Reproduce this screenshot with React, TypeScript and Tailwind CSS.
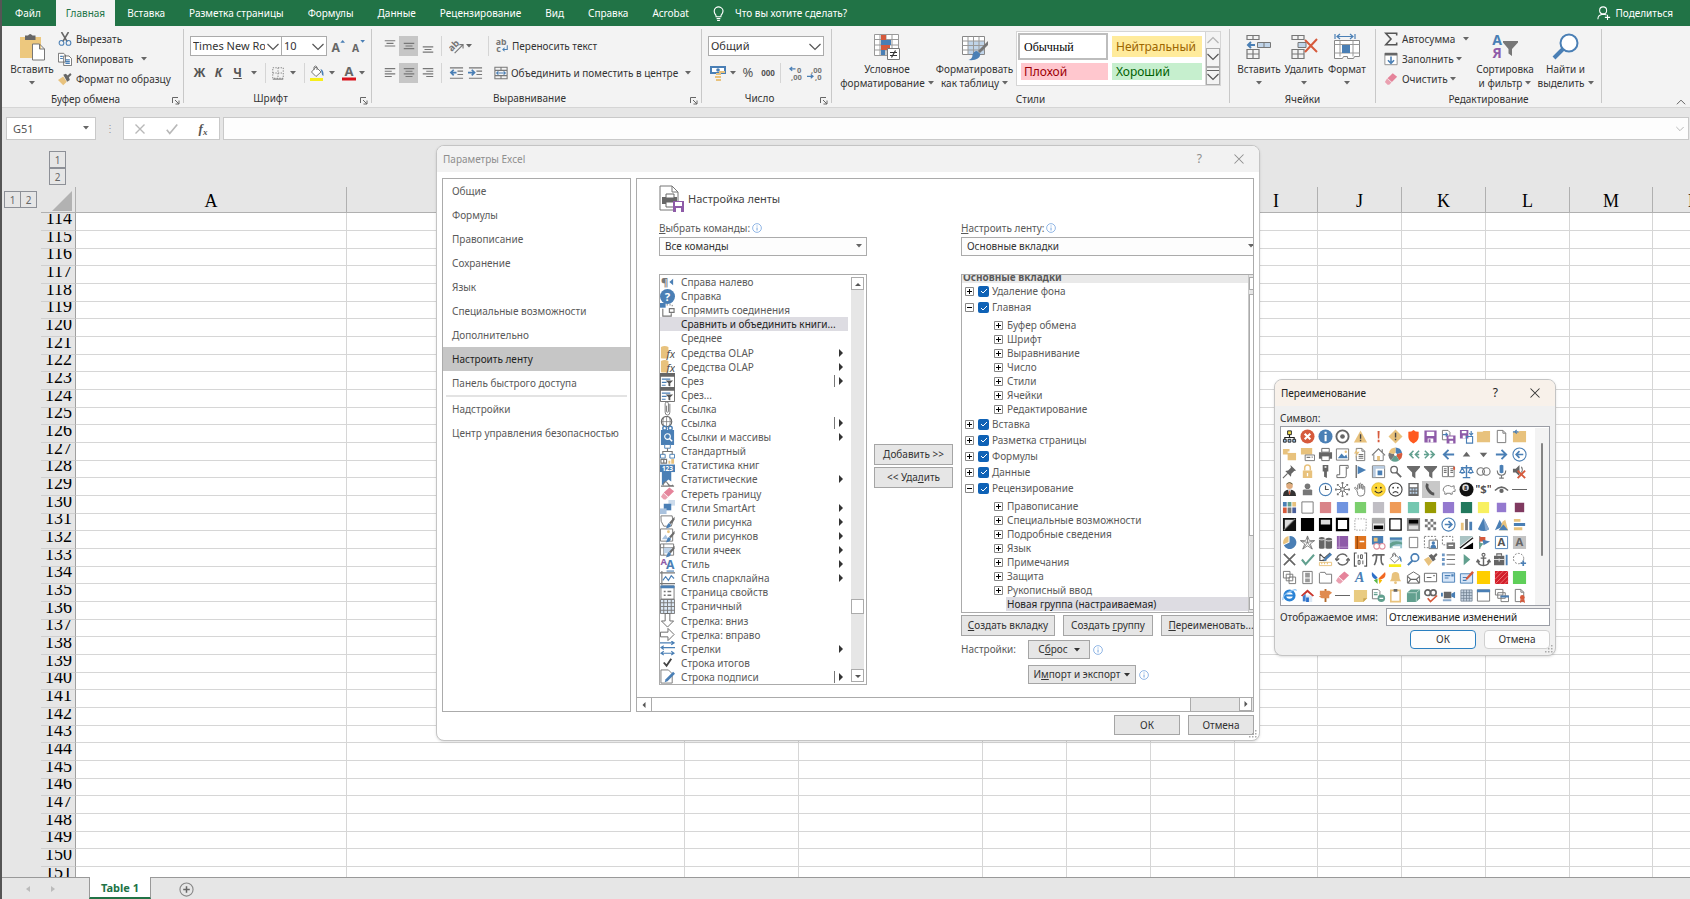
import React, { FC, ReactNode, useState } from 'react'

const BLUE = '#4a7fb5'
const GRAY = '#777777'
const TAN = '#e8c27d'
const PURPLE = '#8e5ba8'
const TEAL = '#62a08f'
const RED = '#d65a3c'

/* ---------- drawing helpers ---------- */

type ShapeProps = { d: string; c?: string; w?: number }

const F: FC<ShapeProps> = ({ d, c = GRAY }) => <path d={d} fill={c} />
const S: FC<ShapeProps> = ({ d, c = GRAY, w = 1.2 }) => (
  <path d={d} fill="none" stroke={c} strokeWidth={w} />
)
const C: FC<{ x?: number; y?: number; r?: number; f?: string; s?: string; w?: number }> = ({
  x = 8,
  y = 8,
  r = 6,
  f = 'none',
  s,
  w = 1.2,
}) => <circle cx={x} cy={y} r={r} fill={f} stroke={s} strokeWidth={w} />
const T: FC<{ x?: number; y?: number; s?: number; c?: string; children: ReactNode }> = ({
  x = 8,
  y = 12,
  s = 12,
  c = GRAY,
  children,
}) => (
  <text x={x} y={y} fontSize={s} fill={c} textAnchor="middle" fontWeight="bold">
    {children}
  </text>
)

const Icon: FC<{ className?: string; box?: number; children: ReactNode }> = ({
  className = 'size-[14px]',
  box = 16,
  children,
}) => (
  <svg viewBox={`0 0 ${box} ${box}`} className={`shrink-0 ${className}`} aria-hidden="true">
    {children}
  </svg>
)

const Caret: FC<{ className?: string }> = ({ className = 'text-[#666]' }) => (
  <svg viewBox="0 0 6 4" className={`h-1 w-1.5 shrink-0 ${className}`} aria-hidden="true">
    <path d="M0 0h6L3 3.5z" fill="currentColor" />
  </svg>
)

const Chevron: FC<{ className?: string }> = ({ className = 'h-2 w-3' }) => (
  <svg viewBox="0 0 12 8" className={`shrink-0 ${className}`} aria-hidden="true">
    <path d="M.5 1 6 6.500 11.500 1" fill="none" stroke="#555" strokeWidth="1.2" />
  </svg>
)

const brush = (
  <>
    <F d="M15.500 3v3l-4 5-1.800-1.800z" c="#6b6b6b" />
    <F d="M9.500 9.500l2 1.800c0 3-2.500 4-5.500 4 1.500-1 1-4 3.500-5.800z" c={BLUE} />
  </>
)
const page = <path d="M3.500 1.500h6l3 3v10h-9z M9.500 1.500v3h3" fill="#fff" stroke={GRAY} />
const folder = <F d="M1 3h6l1-1h7v12H1z" c={TAN} />
const floppy = (
  <>
    <F d="M1.500 1.500h13v13h-13z" c={PURPLE} />
    <F d="M4 3h8v4.500H4zM5 10h6v4.500H5z" c="#fff" />
    <F d="M6 11h2v3H6z" c={PURPLE} />
  </>
)
const eraser = (
  <>
    <F d="M10 1.500l5 4-6 6-5-4.500z" c="#e5839a" />
    <F d="M3.500 7.500l5 4.500-2.500 2.500H4l-3-3z" c="#eaa0b0" />
  </>
)
const bucket = (
  <>
    <F d="M1 13h13v3H1z" c="#f7ee1a" />
    <path d="M7 2l5 5-5 4.500L2.500 7z M5 5V2q1.500-2 3 0v3" fill="#fff" stroke={GRAY} />
    <F d="M11.500 4q3.500 1 3 7-2-1-2-4z" c={BLUE} />
  </>
)

/* symbols offered for a ribbon group, in reading order */
const symbols: ReactNode[] = [
  <><S d="M8 6v3M3 11V9h10v2" c="#222" /><path d="M6 2h4v4H6z" fill="#f4e04d" stroke="#222" /><path d="M1.500 11h3v3h-3zM6.500 11h3v3h-3zM11.500 11h3v3h-3z" fill="#9cc3e6" stroke="#222" /></>,
  <><C r={7.5} f={RED} /><S d="M5 5l6 6M11 5l-6 6" c="#fff" w={2.2} /></>,
  <><C r={7.5} f={BLUE} /><F d="M7 6.500h2.200V13H7zM7 3h2.200v2H7z" c="#fff" /></>,
  <><C r={6.5} s="#666" w={2} /><C r={2.5} f="#666" /></>,
  <><F d="M8 1.500L15 14.500H1z" c={TAN} /><F d="M7.300 5.500h1.500v5H7.300zM7.300 11.500h1.500V13H7.300z" c="#444" /></>,
  <F d="M7 2h2.200L8.800 10H7.300zM7.100 11.500h2V14h-2z" c={RED} />,
  <><F d="M8 .5L15.500 8 8 15.500.5 8z" c={TAN} /><F d="M7.300 4h1.500v5H7.300zM7.300 10.500h1.500V12H7.300z" c="#444" /></>,
  <F d="M2.500 3q3.500 0 5.500-2 2 2 5.500 2v5c0 4-3 6-5.500 7.500C5.500 14 2.500 12 2.500 8z" c="#ff5a1f" />,
  floppy,
  <><path d="M1.500 1.500h6l2 2v8h-8z" fill="#fff" stroke={GRAY} /><S d="M2 6h4M5 4l2 2-2 2" c={BLUE} /><F d="M6 7h9.500v8.500H6z" c={PURPLE} /><F d="M8 8h5v2.500H8zM9 12.500h4v3H9z" c="#fff" /></>,
  <><F d="M1 1h9v9H1z" c={PURPLE} /><F d="M3 2h5v2.500H3zM4 7h3v3H4z" c="#fff" /><S d="M8 8h6.500v7H8zM13 2v4M11 4.500l2 2 2-2" c={BLUE} /></>,
  folder,
  page,
  <>{folder}<S d="M1 3h6M5 1L3 3l2 2" c={BLUE} /></>,
  <><F d="M1 2h7v6H1zM6 6h9v8H6z" c={TAN} /><S d="M6 5.500h9" c="#fff" /></>,
  <><F d="M1 1h12v7H1z" c={TAN} /><path d="M5.500 8.500h10v6h-10z" fill="#fff" stroke={GRAY} /><S d="M7 11h4M13 10v1.500" /></>,
  <><F d="M1 5.500h14v7H1z" c="#666" /><path d="M4 1.500h8v4H4zM4 9.500h8v5H4z" fill="#fff" stroke="#666" /></>,
  <><path d="M1.500 2h13v12h-13z" fill="#fff" stroke={GRAY} /><F d="M3 12l4-5 3 3 2-2 1.500 4z" c={BLUE} /><C x={11.500} y={5} r={1.3} f={TAN} /></>,
  <>{page}<S d="M6 8h5M6 10h5M6 12h5" /><F d="M5 1L1 7h3l-2 5 5-7H4z" c={TAN} /></>,
  <><path d="M3 8v6.500h10V8" fill="#fff" stroke={GRAY} /><S d="M1 9l7-7 7 7M12 2.500v3" /><F d="M6.500 9.500h3v5h-3z" c={TAN} /></>,
  <><F d="M8 8V.5A7.500 7.500 0 0 1 15 6z" c={BLUE} /><F d="M8 8l7-2a7.500 7.500 0 0 1-3 8z" c={RED} /><F d="M8 8l4 6a7.500 7.500 0 0 1-9 0z" c={TEAL} /><F d="M8 8l-5 6A7.500 7.500 0 0 1 1 6z" c={GRAY} /><F d="M8 8L1 6A7.500 7.500 0 0 1 8 .5z" c={TAN} /><C r={1.500} f="#fff" /></>,
  <S d="M8 4L4 8l4 4M14 4l-4 4 4 4M4 8h3M10 8h4" c={TEAL} w={1.6} />,
  <S d="M8 4l4 4-4 4M2 4l4 4-4 4M1 8h4M8 8h4" c={TEAL} w={1.6} />,
  <S d="M14 8H3M8 3L3 8l5 5" c={BLUE} w={2} />,
  <F d="M8 5l4 5H4z" c="#666" />,
  <F d="M8 11L4 6h8z" c="#666" />,
  <S d="M2 8h11M8 3l5 5-5 5" c={BLUE} w={2} />,
  <><C r={7} s={BLUE} /><S d="M12 8H4.500M8 4.500L4.500 8 8 11.500" c={BLUE} w={1.8} /></>,
  <><F d="M9 1l6 6-2 .5-3 3-.5 3-6-6 3-.5 3-3z" c="#666" /><S d="M6 10l-5 5" c="#666" /></>,
  <><F d="M3 7h10v8H3z" c={TAN} /><S d="M5 7V4a3 3 0 0 1 6 0v3" c={TAN} w={1.600} /><F d="M7.300 9.500h1.400V13H7.300z" c="#fff" /></>,
  <><F d="M5 1h6v7H9.500v7l-3-1.500V8H5z" c="#666" /><F d="M7 2.500h2v1.500H7z" c="#fff" /></>,
  <><path d="M5 1.500h9v3h-2v8q0 2-2 2H2v-3h3z" fill="#fff" stroke="#666" /><S d="M12 4.500V3" /></>,
  <><S d="M3.500 1v14" c={GRAY} w={1.600} /><F d="M5 2l9 4.500L5 11z" c={BLUE} /></>,
  <><path d="M1.500 2h13v12.500h-13z" fill="#fff" stroke={GRAY} /><F d="M2 2h12.500v3H2zM2 5h3v9H2z" c="#b8cbe0" /><F d="M7 7h5v5H7z" c={BLUE} /></>,
  <><C x={6.500} y={6} r={3.500} s="#666" w={1.400} /><S d="M9 9l5 5" c="#666" w={2} /></>,
  <F d="M1 2h14v1.500L10 9v6.500L6.500 13V9L1 3.500z" c="#6b6b6b" />,
  <F d="M1 2h14v1.500L10 9v6.500L6.500 13V9L1 3.500z" c="#6b6b6b" />,
  <><path d="M1.500 2.500h6v11h-6zM8 2.500h6v11H8z" fill="#fff" stroke={GRAY} /><S d="M3 5h3M3 7h3M3 9h3M10 5h3M10 7h3M10 9h3" /><F d="M13 3h2v3h-2z" c={RED} /></>,
  <><S d="M8 1v13M4 14.500h8M2 4h12" c={BLUE} w={1.500} /><S d="M3.500 4L1 9h5zM12.500 4L10 9h5z" c={BLUE} /><F d="M1 9h5q-2.500 3-5 0M10 9h5q-2.500 3-5 0" c={BLUE} /></>,
  <><C x={5} r={4} s={GRAY} /><C x={11} r={4} s={GRAY} /></>,
  <><F d="M6 1.500q2-1.500 4 0V9q-2 1.500-4 0z" c={BLUE} /><S d="M3.500 7q0 5 4.500 5t4.500-5M8 12v3M5.500 15h5" /></>,
  <><F d="M1 5h3l4-4v12L4 9H1z" c="#666" /><S d="M10 3q2 3 0 6" /><S d="M6 7l8 8M14 7l-8 8" c={RED} w={2} /></>,
  <><C y={4} r={3.500} f="#e0ac7e" /><F d="M4.500 3q3-4 7 0L11 1.500Q8-1 5 1.500z" c="#553" /><F d="M1 15q0-7 7-7t7 7z" c="#333" /><F d="M6.500 8h3L8 14z" c="#fff" /><F d="M7.500 9h1l.5 4H7z" c={RED} /></>,
  <><C y={4.500} r={3} f="#777" /><F d="M3 14V9q0-1 1.500-1h7Q13 8 13 9v5z" c="#777" /></>,
  <><C r={6.500} s={BLUE} /><S d="M8 4v4h3.500" c="#555" /></>,
  <><S d="M8 2v12M2 8h12M4 4l8 8M12 4l-8 8" c={GRAY} w={1} /><C r={2} f="#fff" s={GRAY} /><F d="M7 0h2v2H7zM7 14h2v2H7zM0 7h2v2H0zM14 7h2v2h-2zM2 2h2v2H2zM12 2h2v2h-2zM2 12h2v2H2zM12 12h2v2h-2z" /></>,
  <path d="M4 9L2 7q-1-1 .5-1.500L5 8V3q1-1.500 1.800 0V7 2q1-1.500 1.900 0v5-4q1-1.500 1.900 0v5-3q1-1.500 1.900 0v6q0 4-4 4T5 12z" fill="#fff" stroke={GRAY} />,
  <><C r={7.3} f="#ffd83b" s="#d8a900" w={0.6} /><C x={5.500} y={6} r={1} f="#333" /><C x={10.500} y={6} r={1} f="#333" /><S d="M4 9.500q4 4.500 8 0" c="#333" /></>,
  <><C r={7} f="#fff" s="#444" /><C x={5.500} y={6} r={0.9} f="#333" /><C x={10.500} y={6} r={0.9} f="#333" /><S d="M5 12q3-3.500 6 0" c="#444" /></>,
  <><F d="M2.500 1h11v14h-11z" c="#666" /><F d="M4 2.500h8v3H4z" c="#fff" /><F d="M4 7h2v2H4zM7 7h2v2H7zM10 7h2v2h-2zM4 10.500h2v2H4zM7 10.500h2v2H7zM10 10.500h2v2h-2z" c="#bcd3ea" /></>,
  <S d="M5 2q-2 3 1 7t6 4" c="#555" w={3} />,
  <><path d="M3 6q4-4 8-1l3-1v3l1 1v2h-2l-1 1v2h-2v-1H6v1H4v-2Q1 9 3 6z" fill="#fff" stroke={GRAY} /></>,
  <><C r={7.500} f="#111" /><C x={7} y={6} r={3.500} f="#ddd" /><T x={7} y={8.500} s={6} c="#111">8</T></>,
  <T s={12} c="#555">"$"</T>,
  <><S d="M1 9q7-7 14 0" c="#666" w={1.600} /><C y={9.500} r={2.300} f="#666" /></>,
  <S d="M0 8h16" c="#666" />,
  <><F d="M1 2h4v5H1z" c={BLUE} /><F d="M6 2h4v5H6z" c={TEAL} /><F d="M11 2h4v5h-4z" c={TAN} /><F d="M1 8h4v6H1z" c={RED} /><F d="M6 8h4v6H6z" c={GRAY} /><F d="M11 8h4v6h-4z" c="#4a5f9a" /></>,
  <path d="M2 2h12v12H2z" fill="#fff" stroke={GRAY} />,
  <F d="M2 2h12v12H2z" c="#d98489" />,
  <F d="M2 2h12v12H2z" c="#7094e0" />,
  <F d="M2 2h12v12H2z" c="#7bcf6d" />,
  <F d="M2 2h12v12H2z" c="#c0bec4" />,
  <F d="M2 2h12v12H2z" c="#ef9b58" />,
  <F d="M2 2h12v12H2z" c="#74c7b0" />,
  <F d="M2 2h12v12H2z" c="#989b00" />,
  <F d="M2 2h12v12H2z" c="#9479cf" />,
  <F d="M2 2h12v12H2z" c="#22795d" />,
  <F d="M2 2h12v12H2z" c="#f8f060" />,
  <F d="M3 3h10v10H3z" c="#9479cf" />,
  <F d="M3 3h10v10H3z" c="#803a60" />,
  <><F d="M1 1h14v14H1z" c="#111" /><F d="M3 3h10L3 13z" c="#ddd" /><S d="M2 14L14 2" c="#777" /></>,
  <F d="M1 1h14v14H1z" c="#000" />,
  <><F d="M1 1h14v14H1z" c="#000" /><F d="M3 3h10v5H3z" c="#ddd" /></>,
  <path d="M2 2h12v12H2z" fill="#fff" stroke="#000" strokeWidth="2.200" />,
  <path d="M2 2h12v12H2z" fill="#fff" stroke="#999" strokeDasharray="1.500 1.500" />,
  <><path d="M1.500 1.500h13v13h-13z" fill="#eee" stroke={GRAY} /><F d="M1 1h14v6H1z" c="#aaa" /><F d="M3 9h10v4H3z" c="#000" /></>,
  <path d="M2 2h12v12H2z" fill="#fff" stroke="#000" strokeWidth="1.400" />,
  <><F d="M1 1h14v14H1z" c="#888" /><F d="M3 3h10v4H3z" c="#000" /><F d="M3 9h10v4H3z" c="#ddd" /></>,
  <F d="M2 2h3v3H2zM8 2h3v3H8zM5 5h3v3H5zM11 5h3v3h-3zM2 8h3v3H2zM8 8h3v3H8zM5 11h3v3H5zM11 11h3v3h-3z" c="#777" />,
  <><C r={7} s={BLUE} /><S d="M4 8h7.500M8 4.500L11.500 8 8 11.500" c={BLUE} w={1.800} /></>,
  <><F d="M2 6h3v8H2z" c={TAN} /><F d="M6.500 2h3v12h-3z" c={GRAY} /><F d="M11 5h3v9h-3z" c={BLUE} /></>,
  <><F d="M8 1l6 12q-6 4-12 0z" c={BLUE} /><F d="M8 1l2 13q2 0 4-1z" c="#86a9d0" /></>,
  <><F d="M1 14l5-11 4 7z" c={BLUE} /><F d="M6 14l3-9 3-2 3 11z" c={TAN} /><F d="M5 14l5-6 5 6z" c={BLUE} /></>,
  <><F d="M2 2h7v3H2z" c={TAN} /><F d="M2 6.500h12v3H2z" c={BLUE} /><F d="M2 11h9v3H2z" c={TAN} /></>,
  <><F d="M8 1a7 7 0 1 1-6 10L8 8z" c={BLUE} /><F d="M7 1v6.500L1.500 10A7 7 0 0 1 7 1z" c={TAN} /></>,
  <S d="M8 1l2 5h5.500L11 9.500l2 5.500-5-3.500L3 15l2-5.500L.5 6H6zM8 1v7l7.500-2M8 8l5 7M8 8l-5 7M8 8L.5 6" w={0.9} />,
  <><F d="M1 3q3-2 6 0v11q-3 1.500-6 0zM8 4q3.500-2 7 0v10q-3.500 1.500-7 0z" c="#666" /><S d="M1 4.500q3 1.500 6 0M8 5.500q3.500 1.500 7 0" c="#ccc" /></>,
  <><F d="M2 1h12v14H2z" c={PURPLE} /><S d="M4.500 1v14M2 13h12" c="#c9a8d8" w={0.8} /></>,
  <><F d="M2 1h12v14H2z" c="#df7420" /><S d="M4.500 1v14" c="#8f4106" /><S d="M7 7h5" c="#fff" w={1.500} /></>,
  <><F d="M1 1h12v9H1z" c={BLUE} /><F d="M3 3h4v4H3z" c={TAN} /><C x={6} y={12} r={3} f="#fff" s="#df8f9e" /><C x={12} y={12} r={3} f="#fff" s="#df8f9e" /></>,
  <><F d="M2 2h13v12H2z" c="#9cc7d0" /><F d="M2 9q5-4 13-1v2q-7-2-13 4z" c={TEAL} /><F d="M2 3h13v2H2z" c={BLUE} /><F d="M5 12h8v2H5z" c="#fff" /></>,
  <path d="M3.500 2.500h9v11h-9z" fill="#fff" stroke={GRAY} />,
  <><path d="M1.500 1.500h12v12h-12z" fill="none" stroke={GRAY} strokeDasharray="2 1.500" /><path d="M6.500 5.500h9v9h-9z" fill="#fff" stroke={GRAY} /><C x={11} y={8.500} r={1.800} f={BLUE} /><F d="M8 14q0-4 3-4t3 4z" c={BLUE} /></>,
  <><path d="M1.500 1.500h11v9h-11z" fill="none" stroke={GRAY} strokeDasharray="2 1.500" /><F d="M6 8h9v7H6z" c="#777" /><S d="M8 11h5" c="#fff" /></>,
  <><F d="M1 1h14L1 12z" c="#aac4c4" /><F d="M15 8v7H4z" c="#000" /><S d="M1 14L15 3" c="#222" w={1.500} /></>,
  <><S d="M4 1v14" c={GRAY} /><F d="M4 2h6v5H4z" c={RED} /><F d="M7 5l8 2-7 4z" c={BLUE} /><F d="M3 8l5 1-4 5z" c={TEAL} /></>,
  <><path d="M1.500 1.500h13v13h-13z" fill="#fff" stroke={BLUE} /><T y={12} s={12} c="#555">A</T></>,
  <><F d="M1 1h14v14H1z" c="#c4c4c4" /><T y={12} s={12} c="#666">A</T></>,
  <S d="M2 2l12 12M14 2L2 14" c="#666" w={1.800} />,
  <S d="M2 8l4 5 9-10" c={TEAL} w={2.200} />,
  <><S d="M2 2v7h6M5 8l8-7M2 2l7 7" c="#555" /><F d="M13 1l2 2-7 6-2 1 1-3z" c={BLUE} /><path d="M1.500 11h13v3.500h-13z" fill="#fff" stroke={TAN} /><S d="M4 11v2M7 11v2M10 11v2" c={TAN} /></>,
  <S d="M2 9a6 6 0 0 1 11-4M14 7a6 6 0 0 1-11 4M0 7l2 2 2.500-2M12 9l2-2 2 2" c="#666" w={1.500} />,
  <><S d="M4 1H1.500v14H4M12 1h2.500v14H12" c="#555" /><S d="M5.500 3v4M8 3h2v4H8zM5.500 9h2v4h-2zM10.500 9v4" c="#555" w={1} /></>,
  <S d="M1.500 4.500Q3 2.500 5 3h9.500M6 3q0 7-2.500 11M11 3q-1 10 2.500 10.500" c="#666" w={1.800} />,
  bucket,
  <><C x={9.500} y={6} r={4} s={BLUE} w={1.800} /><S d="M7 9l-5 5" c={BLUE} w={2.200} /></>,
  <><F d="M1 8l5-3 4 5-4 5z" c={TAN} /><F d="M6 4l3-2 2 2 3-3 1.500 2-3 3 1 2-3 2z" c="#666" /></>,
  <><F d="M1 1.500h3v3H1zM1 6.500h3v3H1zM1 11.500h3v3H1z" c="#6e97c4" /><S d="M6 3h9M6 8h9M6 13h9" /></>,
  <F d="M5 2l7 6-7 6z" c={TEAL} />,
  <><C y={3} r={1.600} s="#666" /><S d="M8 5v10M5 6.500h6M2 9q0 5 6 5.500 6-.5 6-5.500M.5 11L2 8.500 4 11M12 11l2-2.500 1.500 2.500" c="#666" w={1.500} /></>,
  <><F d="M0 4h11v10H0z" c="#666" /><S d="M3 4V2h5v2" c="#666" /><S d="M0 8h11M5.500 7v3" c="#ddd" /><S d="M13.500 3v11" c={BLUE} w={2} /></>,
  <><circle cx="7" cy="7" r="5.500" fill="none" stroke={GRAY} strokeDasharray="2 1.500" /><S d="M12 9v6M9 12h6" c={BLUE} w={1.800} /></>,
  <path d="M1.500 1.500h7v7h-7zM4.500 4.500h7v7h-7zM7.500 7.500h7v7h-7z" fill="#fff" stroke={GRAY} />,
  <><path d="M3 1.500h10v13H3z" fill="#fff" stroke={GRAY} /><F d="M5.500 3h5v5h-5zM5.500 9h5v4h-5z" c="#999" /></>,
  <path d="M1.500 14V3.500l1-1h5l1 2h6V14z" fill="#fff" stroke={GRAY} />,
  eraser,
  <text x="7" y="13" fontSize="15" fontStyle="italic" fontWeight="bold" fill={BLUE} textAnchor="middle" fontFamily="Liberation Serif, serif">A</text>,
  <><F d="M7 8L1 2q-1 6 4 8z" c="#2c6fc9" /><F d="M8 9l7-7q2 7-5 8z" c="#f26722" /><F d="M7 9l-4 2 4 4z" c="#5bb847" /><F d="M8 9l4 2-3 4z" c="#f7b900" /></>,
  <><F d="M2 12q2-2 2-6 0-4 4-4t4 4q0 4 2 6z" c={TAN} /><C y={13.500} r={1.500} f={TAN} /></>,
  <><path d="M1.500 6L8 2l6.500 4v8h-13z" fill="#fff" stroke="#666" /><S d="M2 7l3 3h6l3-3M2 14l3-4M14 14l-3-4" c="#666" /></>,
  <><path d="M1.500 3.500h13v9h-13z" fill="#fff" stroke="#666" /><S d="M4 8h5M11 6h1.500" c="#666" /></>,
  <><path d="M1.500 3h13v10h-13z" fill="#d7e6f8" stroke={BLUE} /><S d="M4 6h6M4 8.500h4" c={BLUE} /><F d="M11 4.500h2.500V7H11z" c={BLUE} /></>,
  <><path d="M1.500 4h13v10h-13z" fill="#d7e6f8" stroke={BLUE} /><S d="M4 8h5M4 11h4" c={BLUE} /><F d="M14 1l2 2-7 7-2 .500.5-2z" c={RED} /></>,
  <F d="M1 1h14v14H1z" c="#ffce00" />,
  <><F d="M1 1h14v14H1z" c="#d3202b" /><S d="M1 5l4-4M1 10l9-9M1 15L15 1M6 15l9-9M11 15l4-4" c="#f28a8a" w={0.8} /></>,
  <F d="M1 1h14v14H1z" c="#5fcf59" />,
  <><C r={5} s="#2a83d6" w={3} /><S d="M4 8h9" c="#2a83d6" w={2} /><S d="M1 13Q0 8 8 4t7-1" c="#8fc4f2" /></>,
  <><F d="M3 8h10v7H3z" c="#dbe8f5" /><F d="M1 8l7-6.500L15 8l-1.500 1L8 4.500 2.500 9z" c="#c9352c" /><F d="M6.500 10h3v5h-3z" c="#2c6fc9" /><F d="M3 9l3-3v8H3z" c="#3f7ed0" /></>,
  <><S d="M8 1v14" c="#b36a2b" w={2} /><F d="M2 3h10l3 2-3 2.500H2zM1 9l3-2h8v4H4z" c="#e08b50" /></>,
  <S d="M0 8h16" c="#666" />,
  <><F d="M1 2h14v9l-4 4H1z" c="#e9cb80" /><F d="M11 15v-4h4z" c="#c9a44e" /></>,
  <><path d="M1.500 1.500h6l2 2v8h-8z" fill="#fff" stroke={GRAY} /><S d="M3 5h4M3 7h4" c={TEAL} /><C x={11} y={11} r={4} f={TEAL} /><S d="M9 11h4" c="#fff" /></>,
  <><path d="M3 2.500h10v12H3z" fill="#fff" stroke={TAN} strokeWidth="1.800" /><F d="M6 1h4v3H6z" c="#666" /></>,
  <><F d="M1 5l4-3.500h10V11l-4 4H1z" c={TEAL} /><S d="M1 5h10v10M11 5l4-3.500" c="#c9e2da" w={0.8} /></>,
  <><C x={5} y={5} r={3} s="#666" w={1.800} /><C x={11} y={5} r={3} s="#666" w={1.800} /><S d="M5 11l3 3.500L15 8" c={RED} w={1.800} /></>,
  <><F d="M3 4h8v7H3z" c="#666" /><F d="M0 5h2v4H0zM11 6l4-2v7l-4-2z" c={BLUE} /><S d="M2 13h9" c="#88a9cc" w={2} /></>,
  <><F d="M2 2h12v12H2z" c="#c6d3e0" /><S d="M2 2h12v12H2zM5 2v12M8 2v12M11 2v12M2 5h12M2 8h12M2 11h12" c="#6f7f90" w={0.800} /></>,
  <><path d="M1.500 2h13v12h-13z" fill="#fff" stroke={GRAY} /><F d="M1 1.500h14v3H1z" c={BLUE} /></>,
  <><path d="M1.500 1.500h8v6h-8zM4 5h8v6H4zM7.500 8.500h8v6h-8z" fill="#fff" stroke={GRAY} /><F d="M7 8h9v2H7z" c={BLUE} /></>,
  <>{page}<C x={11} y={10} r={2.500} f={RED} /><F d="M9 12h4l1 4-3-1.500L8.500 16z" c={RED} /></>,
]

/* ---------- ribbon ---------- */

const Group: FC<{ label: string; className: string; launcher?: boolean; children: ReactNode }> = ({
  label,
  className,
  launcher,
  children,
}) => (
  <section className={`relative flex shrink-0 flex-col ${className}`}>
    <div className="flex h-[63px]">{children}</div>
    <h2 className={`text-center leading-[18px] ${launcher ? 'pr-[14px]' : ''}`}>{label}</h2>
    {launcher && (
      <button type="button" aria-label={label} className="absolute right-[3px] bottom-0.5">
        <Icon className="size-2" box={8}>
          <S d="M.5 6V.5H6M3 3l4 4M7 3.500V7H3.500" c="#666" w={1} />
        </Icon>
      </button>
    )}
  </section>
)

const Rule = () => <div className="mt-0.5 h-[74px] w-px shrink-0 bg-[#c8c8c8]" />

const Small: FC<{ icon: ReactNode; text: string; caret?: boolean; gap?: string }> = ({
  icon,
  text,
  caret,
  gap = 'ml-1',
}) => (
  <button type="button" className="flex h-5 items-center whitespace-nowrap">
    <span className="mr-1 flex">{icon}</span>
    {text}
    {caret && (
      <span className={gap}>
        <Caret />
      </span>
    )}
  </button>
)

const Big: FC<{ icon: ReactNode; lines: string[]; className: string }> = ({
  icon,
  lines,
  className,
}) => (
  <button
    type="button"
    className={`flex shrink-0 flex-col items-center whitespace-nowrap leading-[14px] ${className}`}
  >
    <span className="mt-1 flex h-8 items-center">{icon}</span>
    <span>{lines[0]}</span>
    <span className="flex h-[14px] items-center gap-[3px]">
      {lines[1]}
      <Caret />
    </span>
  </button>
)

const Tool: FC<{ label: string; on?: boolean; className?: string; children: ReactNode }> = ({
  label,
  on,
  className = 'w-[19px]',
  children,
}) => (
  <button
    type="button"
    aria-label={label}
    className={`flex h-5 shrink-0 items-center justify-center ${className} ${on ? 'bg-[#c6c6c6]' : ''}`}
  >
    {children}
  </button>
)

const Combo: FC<{ label: string; value: string; className: string }> = ({
  label,
  value,
  className,
}) => (
  <div className={`relative h-5 shrink-0 border border-[#ababab] bg-white ${className}`}>
    <select
      aria-label={label}
      className="h-full w-full appearance-none overflow-hidden pr-4 pl-0.5 text-[11px] leading-[18px]"
    >
      <option>{value}</option>
    </select>
    <Chevron className="pointer-events-none absolute top-[6px] right-[2px] h-2 w-3" />
  </div>
)

const alignPaths = {
  top: 'M2 2h12M4 5h8M2 8h12',
  middle: 'M2 5h12M4 8h8M2 11h12',
  bottom: 'M2 9h12M4 12h8M2 15h12',
  left: 'M2 3h12M2 6h8M2 9h12M2 12h8',
  center: 'M2 3h12M4 6h8M2 9h12M4 12h8',
  right: 'M2 3h12M6 6h8M2 9h12M6 12h8',
}

const tabsLeft = [
  'Вставка',
  'Разметка страницы',
  'Формулы',
  'Данные',
  'Рецензирование',
  'Вид',
  'Справка',
  'Acrobat',
]

const TabBar = () => (
  <nav className="flex h-[26px] shrink-0 items-center bg-[#217346] text-white">
    <button type="button" className="h-full pr-[15px] pl-[13px]">
      Файл
    </button>
    <button type="button" className="h-full bg-[#f3f3f3] px-2.5 text-[#217346]">
      Главная
    </button>
    {tabsLeft.map((tab) => (
      <button type="button" key={tab} className="h-full px-3 whitespace-nowrap">
        {tab}
      </button>
    ))}
    <button type="button" className="ml-2.5 flex h-full items-center gap-[9px] whitespace-nowrap">
      <Icon className="size-[15px]">
        <S d="M5.500 11.500Q5.500 9.500 4 8q-1.500-4 1-6 3-2 6 0t1 6q-1.500 1.500-1.500 3.500zM6 13.500h4M6.500 15.500h3" c="#fff" />
      </Icon>
      Что вы хотите сделать?
    </button>
    <button type="button" className="mr-[17px] ml-auto flex h-full items-center gap-1">
      <Icon className="size-[14px]">
        <C x={7} y={5} r={4} s="#fff" w={1.200} />
        <S d="M1 15q0-5 6-5.500 2.500 0 4 1M9 13h6M12 10v6" c="#fff" />
      </Icon>
      Поделиться
    </button>
  </nav>
)

const cellsIcon = (
  <S d="M2 2.500h12v4H2zM8 2.500v4M2 16.500h12v9H2zM8 16.500v9M2 21h12" />
)

const Ribbon = () => (
  <div className="flex h-[82px] shrink-0 overflow-hidden border-b border-[#d5d5d5] bg-[#f3f3f3] pt-px text-[#333]">
    <Group label="Буфер обмена" className="w-[181px]" launcher>
      <Big
        className="w-14 pl-1"
        lines={['Вставить']}
        icon={
          <Icon className="size-7" box={28}>
            <F d="M2 4h21v21H2z" c="#edc87e" />
            <F d="M7 2.500h3q2-3 4.500 0h3V7H7z" c="#666" />
            <path d="M14.500 11h7l5 5v11h-12zM21.500 11v5h5" fill="#fff" stroke="#777" />
          </Icon>
        }
      />
      <div className="flex flex-col pt-0.5">
        <Small
          text="Вырезать"
          icon={
            <Icon className="size-[14px]">
              <S d="M4 0l6.500 11M12 0L5.500 11" c="#666" w={1.800} />
              <C x={4} y={12.500} r={2.700} s={BLUE} />
              <C x={12} y={12.500} r={2.700} s={BLUE} />
            </Icon>
          }
        />
        <Small
          text="Копировать"
          caret
          gap="ml-2"
          icon={
            <Icon>
              <path d="M.5 1.500h6l2 2v8h-8zM6.500 4.500h6l3 3v8h-9z" fill="#fff" stroke="#666" />
              <S d="M2.500 5h3M2.500 7.500h3M8.500 9h5M8.500 11h5M8.500 13h5" c={BLUE} />
            </Icon>
          }
        />
        <Small
          text="Формат по образцу"
          icon={
            <Icon>
              <F d="M0 9l6-4 4 6-4 4z" c={TAN} />
              <F d="M6 3l3-1 2 2 3-3 1.500 2-3 3 1 3-3 2z" c="#666" />
            </Icon>
          }
        />
      </div>
    </Group>
    <Rule />
    <Group label="Шрифт" className="w-[187px]" launcher>
      <div className="flex flex-col gap-[7px] pt-[9px] pl-1.5">
        <div className="flex">
          <Combo label="Шрифт" value="Times New Roman" className="w-[92px]" />
          <Combo label="Размер" value="10" className="-ml-px w-[46px]" />
          <Tool label="Увеличить размер" className="w-5">
            <Icon className="size-[15px]">
              <T x={6} y={14} s={13} c="#666">A</T>
              <F d="M11 4h5l-2.500-3z" c={BLUE} />
            </Icon>
          </Tool>
          <Tool label="Уменьшить размер" className="w-5">
            <Icon className="size-[15px]">
              <T x={6} y={14} s={11} c="#666">A</T>
              <F d="M11 1h5l-2.500 3z" c={BLUE} />
            </Icon>
          </Tool>
        </div>
        <div className="flex items-center text-[12px] font-bold text-[#555]">
          <Tool label="Полужирный">Ж</Tool>
          <Tool label="Курсив">
            <i>К</i>
          </Tool>
          <Tool label="Подчеркнутый">
            <u>Ч</u>
          </Tool>
          <span className="mx-1"><Caret /></span>
          <div className="ml-1 h-5 w-px bg-[#d5d5d5]" />
          <Tool label="Границы" className="w-6">
            <Icon>
              <path d="M2 2h12v12H2zM8 2v12M2 8h12" fill="none" stroke="#777" strokeDasharray="1.500 1.500" />
              <S d="M2 15h12" />
            </Icon>
          </Tool>
          <Caret />
          <div className="ml-2 h-5 w-px bg-[#d5d5d5]" />
          <Tool label="Заливка" className="w-6">
            <Icon className="size-4">{bucket}</Icon>
          </Tool>
          <Caret />
          <Tool label="Цвет текста" className="ml-1 w-5">
            <Icon className="size-4">
              <T y={11} s={13} c="#666">A</T>
              <F d="M1 12.500h14v3H1z" c="#d9121b" />
            </Icon>
          </Tool>
          <Caret />
        </div>
      </div>
    </Group>
    <Rule />
    <Group label="Выравнивание" className="w-[329px]" launcher>
      <div className="flex flex-col gap-[7px] pt-[9px] pl-2">
        <div className="flex items-center">
          <Tool label="По верхнему краю"><Icon><S d={alignPaths.top} /></Icon></Tool>
          <Tool label="По середине" on><Icon><S d={alignPaths.middle} /></Icon></Tool>
          <Tool label="По нижнему краю"><Icon><S d={alignPaths.bottom} /></Icon></Tool>
          <div className="ml-1 h-5 w-px bg-[#d5d5d5]" />
          <Tool label="Ориентация" className="ml-1 w-5">
            <Icon className="size-[15px]">
              <g transform="rotate(-45 6 8)"><T x={6} y={10} s={10}>ab</T></g>
              <S d="M6 15l9-9M11 6h4v4" />
            </Icon>
          </Tool>
          <Caret />
          <div className="ml-4 h-5 w-px bg-[#d5d5d5]" />
          <button type="button" className="ml-1.5 flex h-5 items-center gap-[3px]">
            <Icon>
              <T x={7} y={7} s={10}>ab</T>
              <T x={4} y={15} s={10}>c</T>
              <S d="M14 7v5H9M11 10l-2 2 2 2" c={BLUE} />
            </Icon>
            Переносить текст
          </button>
        </div>
        <div className="flex items-center">
          <Tool label="По левому краю"><Icon><S d={alignPaths.left} /></Icon></Tool>
          <Tool label="По центру" on><Icon><S d={alignPaths.center} /></Icon></Tool>
          <Tool label="По правому краю"><Icon><S d={alignPaths.right} /></Icon></Tool>
          <div className="ml-1 h-5 w-px bg-[#d5d5d5]" />
          <Tool label="Уменьшить отступ" className="ml-1 w-5">
            <Icon className="size-[15px]"><S d="M1 2h14M9 5.500h6M9 9h6M1 13h14" /><S d="M8 7H2M5 4L2 7l3 3" c={BLUE} w={1.800} /></Icon>
          </Tool>
          <Tool label="Увеличить отступ">
            <Icon className="size-[15px]"><S d="M1 2h14M9 5.500h6M9 9h6M1 13h14" /><S d="M0 7h6M4 4l3 3-3 3" c={BLUE} w={1.800} /></Icon>
          </Tool>
          <button type="button" className="ml-[9px] flex h-5 items-center gap-[3px] whitespace-nowrap">
            <Icon>
              <S d="M1 1.500h14v13H1zM1 5h14M1 11h14M8 1.500V5M8 11v3.500" />
              <S d="M3 8h10M5 6L3 8l2 2M11 6l2 2-2 2" c={BLUE} />
            </Icon>
            Объединить и поместить в центре
            <span className="ml-1"><Caret /></span>
          </button>
        </div>
      </div>
    </Group>
    <Rule />
    <Group label="Число" className="w-[129px]" launcher>
      <div className="flex flex-col gap-[7px] pt-[9px] pl-1.5">
        <Combo label="Числовой формат" value="Общий" className="w-[116px]" />
        <div className="flex items-center text-[#555]">
          <Tool label="Финансовый формат" className="w-5">
            <Icon className="size-4">
              <F d="M0 1h16v8H0z" c={BLUE} />
              <F d="M2 3h12v4H2z" c="#fff" />
              <C y={5} r={1.800} f={BLUE} />
              <F d="M6 8h5v2H6zM9 6h6v2H9zM5 11h6v2H5zM6 14h5v2H6z" c={TAN} />
            </Icon>
          </Tool>
          <Caret className="ml-0.5 text-[#666]" />
          <Tool label="Процентный формат" className="ml-0.5 w-5 text-[13px]">%</Tool>
          <Tool label="Формат с разделителями" className="w-5 text-[8px] font-bold">000</Tool>
          <div className="ml-0.5 h-5 w-px bg-[#d5d5d5]" />
          <Tool label="Увеличить разрядность" className="ml-1 w-5">
            <Icon className="size-[15px]"><T x={12} y={7} s={8}>0</T><T x={9} y={15} s={8}>,00</T><S d="M8 3H2M4.500 1L2 3l2.500 2" c={BLUE} /></Icon>
          </Tool>
          <Tool label="Уменьшить разрядность">
            <Icon className="size-[15px]"><T x={10} y={7} s={8}>,00</T><T x={12} y={15} s={8}>,0</T><S d="M0 11h6M4 9l2.500 2L4 13" c={BLUE} /></Icon>
          </Tool>
        </div>
      </div>
    </Group>
    <Rule />
    <Group label="Стили" className="w-[397px]">
      <Big
        className="w-[102px] pl-2"
        lines={['Условное', 'форматирование']}
        icon={
          <Icon className="size-7" box={28}>
            <path d="M1.500 1.500h24v21h-24zM7 1.500v21M13 1.500v21M19 1.500v21M1.500 6.500h24M1.500 12h24M1.500 17h24" fill="#fff" stroke="#999" />
            <F d="M8 2h5v5H8zM8 12h9v5H8z" c={RED} />
            <F d="M8 7h10v5H8zM8 17h4v5H8z" c={BLUE} />
            <path d="M14.500 15.500h12v11h-12z" fill="#fff" stroke="#777" />
            <S d="M17 19.500h7M17 22.500h7M22.500 17.500l-4 7" c="#333" />
          </Icon>
        }
      />
      <Big
        className="w-[81px]"
        lines={['Форматировать', 'как таблицу']}
        icon={
          <Icon className="size-7" box={28}>
            <path d="M1.500 3.500h22v18h-22z" fill="#fff" stroke="#888" />
            <F d="M7 8h16v13H7z" c="#c0d4e9" />
            <S d="M1.500 8h22M1.500 12.500h22M1.500 17h22M7 3.500v18M12.500 3.500v18M18 3.500v18" c="#999" w={1} />
            <F d="M27 8v4l-8 8-2-2z" c="#777" />
            <F d="M16 18l3.500 3q-1 7-12 6 4-1 4-5 1-4 4.500-4z" c={BLUE} />
          </Icon>
        }
      />
      <div className="mt-1 ml-px flex h-[55px] w-[205px] border border-[#d5d5d5] bg-white">
        <div className="grid flex-1 grid-cols-2 gap-x-1 gap-y-[3px] p-px">
          <button type="button" className="border-2 border-[#bdbdbd] bg-white pl-1 text-left text-[12px] text-black [font-family:'Liberation_Serif',serif]">
            Обычный
          </button>
          <button type="button" className="my-[3px] bg-[#ffeb9c] pl-1 text-left text-[12px] leading-none text-[#9c6500]">
            Нейтральный
          </button>
          <button type="button" className="mb-1 ml-[3px] bg-[#ffc7ce] pl-[3px] text-left text-[12px] leading-none text-[#9c0006]">
            Плохой
          </button>
          <button type="button" className="mb-1 bg-[#c6efce] pl-1 text-left text-[12px] leading-none text-[#006100]">
            Хороший
          </button>
        </div>
        <div className="ml-0.5 flex w-[15px] flex-col border-l border-[#d5d5d5] bg-[#f3f3f3]">
          <button type="button" aria-label="Вверх" className="flex flex-1 items-center justify-center opacity-40">
            <Chevron className="h-2 w-3 rotate-180" />
          </button>
          <button type="button" aria-label="Вниз" className="flex flex-1 items-center justify-center border border-[#ababab]">
            <Chevron />
          </button>
          <button type="button" aria-label="Ещё" className="flex flex-1 flex-col items-center justify-center gap-0.5 border border-[#ababab]">
            <span className="h-px w-3 bg-[#666]" />
            <Chevron />
          </button>
        </div>
      </div>
    </Group>
    <Rule />
    <Group label="Ячейки" className="w-[145px]">
      <Big
        className="w-[48px] pl-2.5"
        lines={['Вставить']}
        icon={
          <Icon className="size-7" box={28}>
            {cellsIcon}
            <path d="M12.500 9.500h13v5h-13zM19 9.500v5" fill="#c0d4e9" stroke="#777" />
            <S d="M10 12H3M6 9l-3 3 3 3" c={BLUE} w={2} />
          </Icon>
        }
      />
      <Big
        className="w-[48px] pl-1"
        lines={['Удалить']}
        icon={
          <Icon className="size-7" box={28}>
            {cellsIcon}
            <path d="M8 9.500h8v5H8z" fill="#c0d4e9" stroke="#777" />
            <S d="M15 7l12 12M27 6L15 19" c={RED} w={2} />
          </Icon>
        }
      />
      <Big
        className="w-[42px]"
        lines={['Формат']}
        icon={
          <Icon className="size-7" box={28}>
            <S d="M2 1v5M22 1v5M4 3.500h16M7 1L4 3.500 7 6M17 1l3 2.500L17 6" c={BLUE} />
            <path d="M1.500 7.500h25v16h-5l-1 2h-6v-2h-4l-1 2h-8z" fill="#fff" stroke="#888" />
            <S d="M7 7.500v16M20 7.500v16M1.500 11.500h25M1.500 20h25" c="#999" w={1} />
            <F d="M9 12h8v8H9z" c={BLUE} />
          </Icon>
        }
      />
    </Group>
    <Rule />
    <Group label="Редактирование" className="w-[225px]">
      <div className="flex w-[84px] shrink-0 flex-col pt-0.5 pl-2">
        <Small
          text="Автосумма"
          caret
          gap="ml-2"
          icon={<Icon><S d="M14.500 4V1.500H2L8 8l-6 6.500h12.500V12" c="#555" w={1.800} /></Icon>}
        />
        <Small
          text="Заполнить"
          caret
          gap="ml-0.5"
          icon={<Icon><path d="M1 1.500h14v13H1z" fill="#fff" stroke="#888" /><F d="M1 1h14v3H1z" c="#666" /><S d="M8 5v8M4.500 9.500L8 13l3.500-3.500" c={BLUE} w={1.800} /></Icon>}
        />
        <Small text="Очистить" caret gap="ml-0.5" icon={<Icon>{eraser}</Icon>} />
      </div>
      <Big
        className="ml-3 w-[66px]"
        lines={['Сортировка', 'и фильтр']}
        icon={
          <Icon className="size-7" box={28}>
            <T x={6} y={12} s={14} c={BLUE}>А</T>
            <T x={6} y={25} s={14} c={PURPLE}>Я</T>
            <F d="M12 8h15v1.500L21 16v7l-3.500-2.500V16L12 9.500z" c="#777" />
          </Icon>
        }
      />
      <Big
        className="w-[55px]"
        lines={['Найти и', 'выделить']}
        icon={
          <Icon className="size-7" box={28}>
            <C x={17} y={10} r={8.500} f="#fff" s={BLUE} w={2} />
            <S d="M11 16L2 25" c={BLUE} w={4} />
          </Icon>
        }
      />
    </Group>
    <Rule />
    <button type="button" aria-label="Свернуть ленту" className="mr-1 mb-0.5 ml-auto self-end">
      <Chevron className="h-1.5 w-2.5 rotate-180" />
    </button>
  </div>
)

const FormulaBar = () => (
  <div className="flex h-8 shrink-0 items-start pt-[9px] pr-px pl-1">
    <div className="relative h-[23px] w-[90px] border border-[#c9c9c9] bg-white">
      <input aria-label="Имя" defaultValue="G51" className="h-full w-full pl-1.5 text-[11px] text-[#555]" />
      <Caret className="pointer-events-none absolute top-2 right-[6px] text-[#666]" />
    </div>
    <span className="w-[27px] text-center leading-[23px] text-[#999]">⋮</span>
    <div className="flex h-[23px] w-[97px] items-center justify-between border border-[#c9c9c9] bg-white px-2.5">
      <button type="button" aria-label="Отмена"><Icon className="size-3"><S d="M2 2l12 12M14 2L2 14" c="#b8b8b8" w={1.800} /></Icon></button>
      <button type="button" aria-label="Ввод"><Icon className="size-3"><S d="M1 9l4 5L15 2" c="#b8b8b8" w={2.200} /></Icon></button>
      <button type="button" aria-label="Вставить функцию" className="w-3 text-[13px] font-bold text-[#555] italic [font-family:'Liberation_Serif',serif]">
        f<sub className="text-[9px]">x</sub>
      </button>
    </div>
    <div className="relative ml-[3px] h-[23px] flex-1 border border-[#c9c9c9] bg-[#fdfdfd]">
      <input aria-label="Строка формул" className="h-full w-full px-2 text-[11px]" />
      <Chevron className="pointer-events-none absolute top-[8px] right-1 h-1.5 w-2 opacity-50" />
    </div>
  </div>
)

/* ---------- sheet ---------- */

const columns = ['A', 'B', 'C', 'D', 'E', 'F', 'G', 'I', 'J', 'K', 'L', 'M', 'N']
const rows = Array.from({ length: 38 }, (_, i) => 114 + i)

const Level: FC<{ n: number; className?: string }> = ({ n, className = '' }) => (
  <button type="button" className={`size-[17px] border border-[#8d9097] text-[10px] leading-none text-[#666] ${className}`}>
    {n}
  </button>
)

const Sheet = () => (
  <div className="flex min-h-0 flex-1 flex-col overflow-hidden text-black">
    <div className="flex h-[47px] shrink-0 flex-col items-start pt-[11px] pl-[47px]">
      <Level n={1} />
      <Level n={2} />
    </div>
    <div className="flex min-h-0 flex-1 overflow-hidden">
      <div className="flex w-[39px] shrink-0 items-start pt-1 pl-0.5">
        <Level n={1} />
        <Level n={2} className="-ml-px" />
      </div>
      <div className="min-w-0 flex-1 overflow-hidden">
        <table className="w-full min-w-[1656px] table-fixed border-separate border-spacing-0 [font-family:'Liberation_Serif',serif] text-[18px]">
          <colgroup>
            <col className="w-[35px]" />
            <col className="w-[271px]" />
            <col className="w-[338px]" />
            <col className="w-[114px]" />
            <col className="w-[184px]" />
            <col className="w-[84px]" />
            <col className="w-[84px]" />
            <col className="w-[84px]" />
            <col className="w-[83px]" />
            <col className="w-[84px]" />
            <col className="w-[84px]" />
            <col className="w-[84px]" />
            <col className="w-[83px]" />
            <col className="w-[84px]" />
            <col />
          </colgroup>
          <thead>
            <tr className="h-[26px]">
              <th className="border-r border-b border-[#b0b0b0] p-0">
                <svg viewBox="0 0 20 20" className="mt-0.5 mr-[3px] ml-auto size-5" aria-hidden="true">
                  <path d="M20 0v20H0z" fill="#b2b2b2" />
                </svg>
              </th>
              {columns.map((c) => (
                <th key={c} scope="col" className="border-r border-b border-[#b0b0b0] p-0 pt-[3px] leading-[22px] font-normal">
                  {c}
                </th>
              ))}
              <th className="border-b border-[#b0b0b0] p-0" />
            </tr>
          </thead>
          <tbody>
            {rows.map((r) => (
              <tr key={r} className="h-[18px] nth-[3n]:h-[17px]">
                <th scope="row" className="border-r border-b border-r-[#a0a0a0] border-b-[#cfcfcf] p-0 font-normal">
                  <div className="h-4 overflow-hidden pr-[3px] text-right leading-[9px]">{r}</div>
                </th>
                {columns.map((c) => (
                  <td key={c} className="border-r border-b border-[#d6d6d6] bg-white p-0" />
                ))}
                <td className="border-b border-[#d6d6d6] bg-white p-0" />
              </tr>
            ))}
          </tbody>
        </table>
      </div>
    </div>
  </div>
)

const SheetTabs = () => (
  <footer className="flex h-[22px] shrink-0 items-stretch border-t border-[#999]">
    <button type="button" aria-label="Назад" className="ml-[23px]">
      <Icon className="size-1.5" box={6}><F d="M5 0v6L1 3z" c="#bbb" /></Icon>
    </button>
    <button type="button" aria-label="Вперёд" className="ml-[19px]">
      <Icon className="size-1.5" box={6}><F d="M1 0v6l4-3z" c="#bbb" /></Icon>
    </button>
    <button
      type="button"
      className="-mt-px ml-[33px] w-[62px] border-x border-b-2 border-x-[#999] border-b-[#217346] bg-white pt-0.5 text-[11px] font-bold text-[#217346]"
    >
      Table 1
    </button>
    <button type="button" aria-label="Новый лист" className="ml-7 pt-0.5">
      <Icon className="size-[15px]"><C r={7} s="#888" /><S d="M8 4.500v7M4.500 8h7" c="#666" w={1.600} /></Icon>
    </button>
  </footer>
)

/* ---------- options dialog ---------- */

const navItems = [
  'Общие',
  'Формулы',
  'Правописание',
  'Сохранение',
  'Язык',
  'Специальные возможности',
  'Дополнительно',
  'Настроить ленту',
  'Панель быстрого доступа',
  'Надстройки',
  'Центр управления безопасностью',
]

type Command = { name: string; sub?: 'arrow' | 'split'; icon?: ReactNode }

const olap = (
  <>
    <F d="M1 2q4-2 8 0v12q-4 1-8 0z" c={TAN} />
    <text x="11.500" y="14" fontSize="12" fontStyle="italic" fill="#555" textAnchor="middle">fx</text>
  </>
)
const slicer = (
  <>
    <path d="M.5 1.500h15v14H.5z" fill="#fff" stroke="#666" />
    <F d="M0 0h16v4H0z" c="#666" />
    <S d="M2 6.500h9M2 10h5M2 13h4" c={BLUE} />
    <F d="M6 8h8l-3 3v3.500l-2-1V11z" c="#555" />
  </>
)

const commands: Command[] = [
  { name: 'Справа налево', icon: <><T x={5} y={12} s={12}>¶</T><F d="M14 4v7l-4-3.500z" c={BLUE} /></> },
  { name: 'Справка', icon: <><C r={8} f={BLUE} /><T y={12.500} s={12} c="#fff">?</T></> },
  { name: 'Спрямить соединения', icon: <><F d="M0 0h6v5H0z" c={BLUE} /><S d="M3 6v8h9v-3M10 6h5v4h-5z" /><path d="M7 2h6v3" fill="none" stroke="#777" strokeDasharray="1.500 1.500" /></> },
  { name: 'Сравнить и объединить книги...' },
  { name: 'Среднее' },
  { name: 'Средства OLAP', sub: 'arrow', icon: olap },
  { name: 'Средства OLAP', sub: 'arrow', icon: olap },
  { name: 'Срез', sub: 'split', icon: slicer },
  { name: 'Срез...', icon: slicer },
  { name: 'Ссылка', icon: <S d="M10.500 3v9q0 3-2.500 3t-2.500-3V3q0-2 1.800-2T9 3v8q0 1-1 1t-1-1V5" w={1} /> },
  { name: 'Ссылка', sub: 'split', icon: <><C x={7} y={6} r={5.500} s="#666" /><S d="M1 6h12M7 0v12M4 1q-2 5 0 10M10 1q2 5 0 10" w={0.8} /><C x={5} y={13} r={2} s={BLUE} w={1.5} /><C x={11} y={13} r={2} s={BLUE} w={1.5} /></> },
  { name: 'Ссылки и массивы', sub: 'arrow', icon: <><F d="M1 0h14v16H1z" c={BLUE} /><C x={8} y={7} r={3} s="#fff" /><S d="M10 9l3 3" c="#fff" w={1.600} /></> },
  { name: 'Стандартный', icon: <><path d="M5 .5h6v4H5zM.5 11h5v4h-5zM10.500 11h5v4h-5z" fill="#fff" stroke={BLUE} /><S d="M8 4.500V8M3 11V8h10v3" /></> },
  { name: 'Статистика книг', icon: <><S d="M1 1.500h6v4H1zM4 1.500v4" /><F d="M9 3h2v3H9zM12 1h3v5h-3z" c={TAN} /><F d="M0 7h16v8H0z" c={BLUE} /><T y={14} s={7} c="#fff">123</T></> },
  { name: 'Статистические', sub: 'arrow', icon: <><F d="M2 0h10v10l-3-2-7 6z" c={BLUE} /><S d="M3 14q3-6 5-2t6 2M1 15h14" /></> },
  { name: 'Стереть границу', icon: eraser },
  { name: 'Стили SmartArt', sub: 'arrow', icon: <><F d="M9 0h7v6H9z" c="#cddcec" /><F d="M4 4h8v7H4z" c={BLUE} /><F d="M0 9h7v6H0z" c="#a9c2de" /></> },
  { name: 'Стили рисунка', sub: 'arrow', icon: <><path d="M1 2h12q2 6-1 11H4q-4-5-3-11z" fill="#fff" stroke="#777" />{brush}</> },
  { name: 'Стили рисунков', sub: 'arrow', icon: <><path d="M.5 1h13v13H.5z" fill="#fff" stroke="#777" /><F d="M2 12l4-5 3 5z" c="#a9c2de" /><C x={9} y={4} r={1.500} f={TAN} />{brush}</> },
  { name: 'Стили ячеек', sub: 'arrow', icon: <><path d="M.5 1h14v12H.5zM.5 5h14M4 1v12" fill="#fff" stroke="#777" /><F d="M4 5h8v6H4z" c="#c0d4e9" />{brush}</> },
  { name: 'Стиль', sub: 'arrow', icon: <><T x={4} y={9} s={10} c={PURPLE}>A</T><T x={11} y={13} s={13} c={BLUE}>A</T><S d="M7 15h8" c={BLUE} /></> },
  { name: 'Стиль спарклайна', sub: 'arrow', icon: <><S d="M2 0v15M0 13.500h16M0 2h16" /><S d="M3 10l3-4 3 4 3-5 3 3" c={BLUE} /></> },
  { name: 'Страница свойств', icon: <><path d="M1 1h14v14H1z" fill="#fff" stroke="#777" /><F d="M.5.5h15v3H.5z" c={BLUE} /><S d="M4 7h2M8 7h4M4 11h2M8 11h4" w={1.600} /></> },
  { name: 'Страничный', icon: <path d="M.5.5h15v15H.5zM4 .5v15M8 .5v15M12 .5v15M.5 4h15M.5 8h15M.5 12h15" fill="#dbe8f5" stroke="#777" /> },
  { name: 'Стрелка: вниз', icon: <path d="M5.500.5h5v8h4L8 15 1.500 8.500h4z" fill="#fff" stroke="#666" /> },
  { name: 'Стрелка: вправо', icon: <path d="M.5 5.500h8v-4L15 8l-6.500 6.500v-4h-8z" fill="#fff" stroke="#666" /> },
  { name: 'Стрелки', sub: 'arrow', icon: <S d="M0 2h14M12 0l3 2-3 2M2 7h14M4 5L1 7l3 2M1 13h14M4 11l-3 2 3 2M12 11l3 2-3 2" c={BLUE} /> },
  { name: 'Строка итогов', icon: <S d="M4 8l3 3.500L12 4" c="#444" w={2} /> },
  { name: 'Строка подписи', sub: 'split', icon: <><path d="M1 1h8l4 4v10H1z" fill="#fff" stroke="#777" /><F d="M14 3l2 2-8 8-3 1 1-3z" c={BLUE} /></> },
]

type Tab = { name: string; groups?: string[] }

const ribbonTabs: Tab[] = [
  { name: 'Удаление фона' },
  {
    name: 'Главная',
    groups: ['Буфер обмена', 'Шрифт', 'Выравнивание', 'Число', 'Стили', 'Ячейки', 'Редактирование'],
  },
  { name: 'Вставка' },
  { name: 'Разметка страницы' },
  { name: 'Формулы' },
  { name: 'Данные' },
  {
    name: 'Рецензирование',
    groups: [
      'Правописание',
      'Специальные возможности',
      'Подробные сведения',
      'Язык',
      'Примечания',
      'Защита',
      'Рукописный ввод',
      'Новая группа (настраиваемая)',
    ],
  },
]

const Info = () => (
  <Icon className="size-2.5">
    <C r={7} s="#6d9fdc" />
    <F d="M7.300 7h1.500v5H7.300zM7.300 4h1.500v1.500H7.300z" c="#6d9fdc" />
  </Icon>
)

const Expander: FC<{ open?: boolean }> = ({ open }) => (
  <Icon className="size-[9px]" box={9}>
    <path d="M.5.5h8v8h-8z" fill="#fff" stroke="#888" />
    <S d={open ? 'M2 4.5h5' : 'M2 4.5h5M4.5 2v5'} c="#000" w={1} />
  </Icon>
)

const Arrow: FC<{ dir: 'up' | 'down' | 'left' | 'right' }> = ({ dir }) => {
  const d = { up: 'M0 5h6L3 2z', down: 'M0 2h6L3 5z', left: 'M4.500 0v6l-3-3z', right: 'M1.500 0v6l3-3z' }[dir]
  return (
    <Icon className="size-1.5" box={6}>
      <F d={d} c="#555" />
    </Icon>
  )
}

const GrayButton: FC<{ className: string; children: ReactNode }> = ({ className, children }) => (
  <button
    type="button"
    className={`flex shrink-0 items-center justify-center whitespace-nowrap border border-[#a5a5a5] bg-[#e6e6e6] text-[#333] ${className}`}
  >
    {children}
  </button>
)

const DialogSelect: FC<{ id: string; label: ReactNode; value: string; className: string }> = ({
  id,
  label,
  value,
  className,
}) => (
  <div>
    <div className="flex h-[18px] items-center gap-0.5">
      <label htmlFor={id}>{label}</label>
      <Info />
    </div>
    <div className={`relative h-[19px] border border-[#ababab] bg-[#fdfdfd] ${className}`}>
      <select id={id} className="h-full w-full appearance-none px-[5px] text-[#333]">
        <option>{value}</option>
      </select>
      <Caret className="pointer-events-none absolute top-[6px] right-1 text-[#666]" />
    </div>
  </div>
)

const CommandList = () => (
  <div className="mt-[18px] flex h-[411px] w-[208px] border border-[#ababab] bg-white">
    <ul className="grid min-w-0 flex-1 auto-rows-fr">
      {commands.map(({ name, sub, icon }, i) => (
        <li key={i} className={`flex min-h-0 items-center ${i === 3 ? 'mr-px bg-[#dddce2] text-[#222]' : ''}`}>
          <span className="flex h-0 w-[15px] shrink-0 items-center">{icon && <Icon className="size-[15px]">{icon}</Icon>}</span>
          <span className="h-0 pl-1.5 leading-[0] whitespace-nowrap">{name}</span>
          {sub && (
            <span className={`mr-1.5 ml-auto flex h-3 items-center pl-1 ${sub === 'split' ? 'border-l border-[#777]' : ''}`}>
              <svg viewBox="0 0 4 8" className="h-2 w-1" aria-hidden="true">
                <path d="M0 0l4 4-4 4z" fill="#333" />
              </svg>
            </span>
          )}
        </li>
      ))}
    </ul>
    <div className="m-0.5 flex w-[13px] shrink-0 flex-col bg-[#e6e6e6]">
      <button type="button" aria-label="Вверх" className="flex size-[13px] items-center justify-center border border-[#ababab] bg-white"><Arrow dir="up" /></button>
      <span className="mt-auto mb-[55px] h-[15px] border border-[#ababab] bg-white" />
      <button type="button" aria-label="Вниз" className="flex size-[13px] items-center justify-center border border-[#ababab] bg-white"><Arrow dir="down" /></button>
    </div>
  </div>
)

const TabTree = () => (
  <div className="mt-[18px] flex h-[339px] w-[303px] overflow-hidden border border-[#ababab] bg-white">
    <div className="min-w-0 flex-1">
      <div className="flex h-2 items-end overflow-hidden bg-[#e9e9e9] pl-px leading-[11px] font-bold">
        Основные вкладки
      </div>
      {ribbonTabs.map((tab) => (
        <div key={tab.name}>
          <div className={`flex items-center gap-1 pl-[3px] ${tab.groups ? 'h-[17px]' : 'h-4'}`}>
            <Expander open={!!tab.groups} />
            <label className="flex items-center gap-[3px]">
              <span className="relative flex size-[11px] items-center justify-center">
                <input type="checkbox" defaultChecked className="absolute inset-0 appearance-none rounded-xs checked:bg-[#0f62b6]" />
                <svg viewBox="0 0 8 8" className="relative size-2" aria-hidden="true">
                  <path d="M1 4l2 2 4-4" fill="none" stroke="#fff" />
                </svg>
              </span>
              {tab.name}
            </label>
          </div>
          {tab.groups && (
            <ul className="pt-0.5">
              {tab.groups.map((group) => {
                const isNew = group.startsWith('Новая')
                return (
                  <li key={group} className="flex h-[14px] items-center pl-8">
                    {!isNew && <Expander />}
                    <span className={isNew ? 'ml-3 flex-1 bg-[#dddce2] pl-px leading-[14px] text-[#222]' : 'ml-1'}>
                      {group}
                    </span>
                  </li>
                )
              })}
            </ul>
          )}
        </div>
      ))}
    </div>
    <div className="flex w-[15px] shrink-0 flex-col border-l border-[#c8c8c8] bg-[#e6e6e6] pt-0.5">
      <button type="button" aria-label="Вверх" className="flex h-[13px] shrink-0 items-center justify-center border border-[#ababab] bg-white"><Arrow dir="up" /></button>
      <span className="mt-1 h-[242px] shrink-0 border border-[#ababab] bg-white" />
      <button type="button" aria-label="Вниз" className="mt-auto mb-0.5 flex h-[13px] shrink-0 items-center justify-center border border-[#ababab] bg-white"><Arrow dir="down" /></button>
    </div>
  </div>
)

const Grip: FC = () => (
  <Icon className="pointer-events-none absolute right-0.5 bottom-0.5 size-2" box={8}>
    <F d="M6 0h1.500v1.500H6zM6 3h1.500v1.500H6zM6 6h1.500v1.500H6zM3 3h1.500v1.500H3zM3 6h1.500v1.500H3zM0 6h1.500v1.500H0z" c="#aaa" />
  </Icon>
)

const OptionsDialog = () => {
  const [active, setActive] = useState<string>('Настроить ленту')

  return (
    <div
      role="dialog"
      aria-label="Параметры Excel"
      className="absolute top-[145px] left-[434px] flex w-[824px] flex-col overflow-hidden rounded-lg border border-[#c4c4c4] bg-white pb-[5px] text-[#5a5a5a] shadow-sm"
    >
      <header className="flex h-[26px] items-center bg-[#f2f2f2] pr-3.5 pl-1.5 text-[#8e8e8e]">
        Параметры Excel
        <button type="button" aria-label="Справка" className="ml-auto text-[12px]">?</button>
        <button type="button" aria-label="Закрыть" className="ml-[31px]">
          <Icon className="size-3"><S d="M2 2l12 12M14 2L2 14" c="#8e8e8e" w={1.400} /></Icon>
        </button>
      </header>
      <div className="flex gap-[5px] px-[5px] pt-1.5">
        <nav className="w-[189px] shrink-0 border border-[#ababab]">
          {navItems.map((item) => (
            <React.Fragment key={item}>
              {item === 'Надстройки' && <hr className="mx-[3px] border-t-2 border-[#e3e3e3]" />}
              <button
                type="button"
                onClick={() => setActive(item)}
                className={`block h-6 w-full pl-[9px] text-left whitespace-nowrap ${
                  active === item ? 'bg-[#c6c6c6] text-[#222]' : ''
                }`}
              >
                {item}
              </button>
            </React.Fragment>
          ))}
        </nav>
        <div className="min-w-0 flex-1 overflow-hidden border border-[#ababab]">
          <div className="flex h-[518px] flex-col pt-1.5 pl-[22px]">
            <div className="flex items-center gap-0.5 text-[11px] leading-[27px] text-[#444]">
              <Icon className="size-[27px]" box={27}>
                <path d="M1 1h12l6 6v18H1zM13 1v6h6" fill="#fff" stroke="#777" />
                <F d="M3 12h15v7H3z" c="#666" />
                <path d="M7 9h8v4H7zM7 17h8v5H7z" fill="#fff" stroke="#666" />
                <F d="M14 16h11v11H14z" c={PURPLE} />
                <F d="M16 17h7v4h-7zM17 23h5v4h-5z" c="#fff" />
              </Icon>
              Настройка ленты
            </div>
            <div className="mt-[7px] flex">
              <div className="shrink-0">
                <DialogSelect id="commands" className="w-[208px]" value="Все команды" label={<><u>В</u>ыбрать команды:</>} />
                <CommandList />
              </div>
              <div className="ml-[7px] flex shrink-0 flex-col gap-0.5 pt-[225px]">
                <GrayButton className="h-[21px] w-[79px]"><u>Д</u>обавить &gt;&gt;</GrayButton>
                <GrayButton className="h-[21px] w-[79px]">&lt;&lt; Уда<u>л</u>ить</GrayButton>
              </div>
              <div className="ml-2 shrink-0">
                <DialogSelect id="tabs" className="w-[298px]" value="Основные вкладки" label={<><u>Н</u>астроить ленту:</>} />
                <TabTree />
                <div className="mt-0.5 flex gap-2">
                  <GrayButton className="h-[21px] w-[94px]"><u>С</u>оздать вкладку</GrayButton>
                  <GrayButton className="h-[21px] w-[90px]">Создать&nbsp;<u>г</u>руппу</GrayButton>
                  <GrayButton className="h-[21px] w-[100px]"><u>П</u>ереименовать...</GrayButton>
                </div>
                <div className="mt-1 grid grid-cols-[67px_auto] items-center gap-y-1.5">
                  <span>Настройки:</span>
                  <div className="flex items-center gap-[3px]">
                    <GrayButton className="h-[19px] w-[62px] gap-1.5"><span>С<u>б</u>рос</span><Caret className="text-[#333]" /></GrayButton>
                    <Info />
                  </div>
                  <div className="col-start-2 flex items-center gap-[3px]">
                    <GrayButton className="h-[19px] w-[108px] gap-1"><span>И<u>м</u>порт и экспорт</span><Caret className="text-[#333]" /></GrayButton>
                    <Info />
                  </div>
                </div>
              </div>
            </div>
          </div>
          <div className="flex h-[14px] border-t border-[#ababab] bg-[#e6e6e6]">
            <button type="button" aria-label="Влево" className="flex w-[15px] items-center justify-center border-r border-[#ababab] bg-white"><Arrow dir="left" /></button>
            <span className="w-[539px] border-r border-[#ababab] bg-white" />
            <button type="button" aria-label="Вправо" className="mr-px ml-auto flex w-[13px] items-center justify-center border border-t-0 border-[#ababab] bg-white"><Arrow dir="right" /></button>
          </div>
        </div>
      </div>
      <div className="flex justify-end gap-2 pt-[3px] pr-[5px]">
        <GrayButton className="h-5 w-[66px]">ОК</GrayButton>
        <GrayButton className="h-5 w-[66px]">Отмена</GrayButton>
      </div>
      <Grip />
    </div>
  )
}

/* ---------- rename dialog ---------- */

const RenameDialog = () => {
  const [symbol, setSymbol] = useState<number>(50)
  const [name, setName] = useState<string>('Отслеживание изменений')

  return (
    <div
      role="dialog"
      aria-label="Переименование"
      className="absolute top-[379px] left-[1272px] flex w-[282px] flex-col overflow-hidden rounded-lg border border-[#c4c4c4] bg-[#f0f0f0] pb-[6px] text-[#333] shadow-sm"
    >
      <header className="flex h-[26px] items-center bg-[#f8f1ea] pr-3.5 pl-1.5 text-[#222]">
        Переименование
        <button type="button" aria-label="Справка" className="ml-auto text-[12px]">?</button>
        <button type="button" aria-label="Закрыть" className="ml-[31px]">
          <Icon className="size-3"><S d="M2 2l12 12M14 2L2 14" c="#333" w={1.400} /></Icon>
        </button>
      </header>
      <div className="flex flex-col px-[5px] pt-[5px]">
        <span className="leading-[15px]">Символ:</span>
        <div className="flex h-[180px] justify-between border border-[#9a9da5] bg-white pt-px">
          <div className="grid h-[176px] w-[247px] grid-cols-14 grid-rows-10">
            {symbols.map((s, i) => (
              <button
                type="button"
                key={i}
                aria-label={`Символ ${i + 1}`}
                onClick={() => setSymbol(i)}
                className={`flex min-h-0 min-w-0 items-center justify-center ${symbol === i ? 'bg-[#c8c8c8]' : ''}`}
              >
                <Icon className="size-[15px]">{s}</Icon>
              </button>
            ))}
          </div>
          <div className="flex w-[14px] justify-center bg-[#f3f3f3] pt-[15px]">
            <span className="h-[113px] w-0.5 rounded bg-[#858585]" />
          </div>
        </div>
        <div className="mt-0.5 flex items-center justify-between">
          <label htmlFor="display-name">Отображаемое имя:</label>
          <input
            id="display-name"
            value={name}
            onChange={(e) => setName(e.target.value)}
            className="h-[18px] w-[164px] border border-[#9a9da5] bg-white px-0.5 text-[#222]"
          />
        </div>
        <div className="mt-1 flex justify-end gap-2">
          <button type="button" className="h-[19px] w-[66px] rounded border border-[#2a7fc0] bg-[#fdfdfd]">ОК</button>
          <button type="button" className="h-[19px] w-[66px] rounded border border-[#d0d0d0] bg-[#fdfdfd]">Отмена</button>
        </div>
      </div>
      <Grip />
    </div>
  )
}

function App() {
  return (
    <div className="relative flex h-screen flex-col overflow-hidden border-l-2 border-[#555] bg-[#e6e6e6] text-[10px] [font-family:'Noto_Sans',sans-serif]">
      <TabBar />
      <Ribbon />
      <FormulaBar />
      <Sheet />
      <SheetTabs />
      <OptionsDialog />
      <RenameDialog />
    </div>
  )
}

export default App
